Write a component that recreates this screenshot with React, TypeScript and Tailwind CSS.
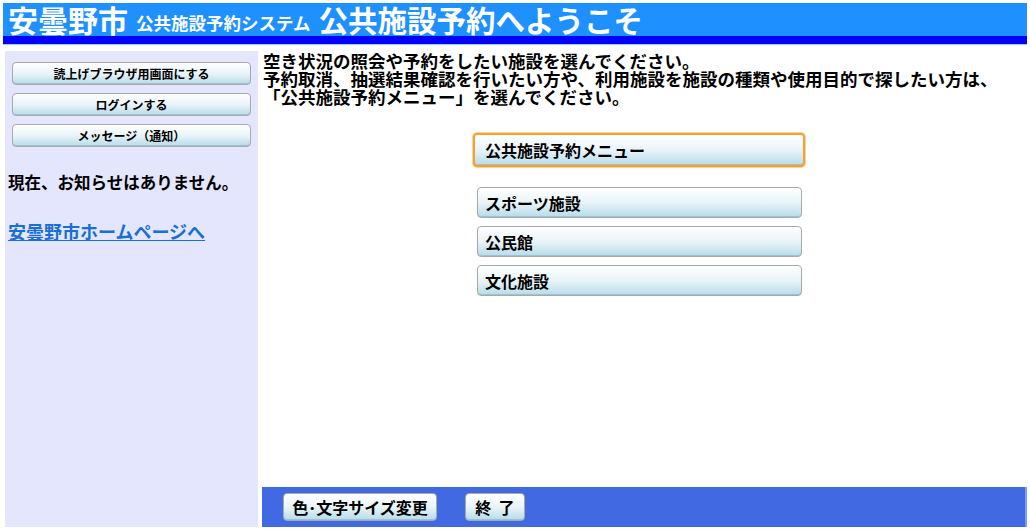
const font = { fontFamily: '"Noto Sans CJK JP", "Noto Sans", sans-serif' };

const btn =
  'rounded-[4px] border border-[#a9a9a9] bg-gradient-to-b from-[#ffffff] via-[#e9f4f8] to-[#b6dce9] shadow-[inset_0_-1px_0_#9cc3d3] text-black font-bold';

const menuItems = ['スポーツ施設', '公民館', '文化施設'];

export default function App() {
  return (
    <div className="h-[530px] w-[1030px] flex flex-col p-[3px] pb-[3px] bg-white overflow-hidden" style={font}>
      <div className="bg-[#1e90ff] h-[33px] flex items-end pl-[5px] text-white font-bold leading-none whitespace-nowrap">
        <span className="text-[30px] pb-[2px]">安曇野市</span>
        <span className="text-[17.5px] ml-[8px] pb-[5px]">公共施設予約システム</span>
        <span className="text-[29.5px] ml-[8px] pb-[2px]">公共施設予約へようこそ</span>
      </div>
      <div className="h-[8px] bg-[#0000ff] border-b border-[#9ccffc] box-content" />
      <div className="flex flex-1 mt-[6px] gap-[4px]">
        <div className="w-[253px] ml-[2px] bg-[#e3e6fc] flex flex-col pt-[11px] pl-[7px]">
          <div className="flex flex-col gap-[8px] w-[239px]">
            <button className={`${btn} h-[23px] text-[12px]`}>読上げブラウザ用画面にする</button>
            <button className={`${btn} h-[23px] text-[12px]`}>ログインする</button>
            <button className={`${btn} h-[23px] text-[12px]`}>メッセージ（通知）</button>
          </div>
          <p className="mt-[25px] -ml-[4px] text-[16.5px] font-bold text-black leading-tight">
            現在、お知らせはありません。
          </p>
          <a href="#" className="mt-[27px] -ml-[4px] text-[18px] font-bold text-[#1a6fd3] underline leading-tight">
            安曇野市ホームページへ
          </a>
        </div>
        <div className="flex-1 flex flex-col">
          <div className="pt-[1px] pl-[1px] text-[17.5px] font-bold text-black leading-[18px] whitespace-nowrap">
            <p>空き状況の照会や予約をしたい施設を選んでください。</p>
            <p>予約取消、抽選結果確認を行いたい方や、利用施設を施設の種類や使用目的で探したい方は、</p>
            <p>「公共施設予約メニュー」を選んでください。</p>
          </div>
          <div className="flex flex-col items-start pl-[211px] mt-[27px]">
            <button
              className={`${btn} w-[332px] h-[34px] text-[16px] text-left pl-[10px] border-2 border-[#f5a030] ring-1 ring-[#fbd29a]`}
            >
              公共施設予約メニュー
            </button>
            <div className="flex flex-col gap-[8px] mt-[20px] ml-[4px]">
              {menuItems.map((m) => (
                <button key={m} className={`${btn} w-[325px] h-[31px] text-[16px] text-left pl-[7px]`}>
                  {m}
                </button>
              ))}
            </div>
          </div>
          <div className="mt-auto h-[40px] bg-[#4169e1] border-r-2 border-[#7f9cf0] flex items-center pl-[21px] gap-[28px]">
            <button className={`${btn} h-[28px] w-[154px] text-[16px]`}>色･文字サイズ変更</button>
            <button className={`${btn} h-[28px] w-[60px] text-[16px]`}>終&nbsp;&nbsp;了</button>
          </div>
        </div>
      </div>
    </div>
  );
}
